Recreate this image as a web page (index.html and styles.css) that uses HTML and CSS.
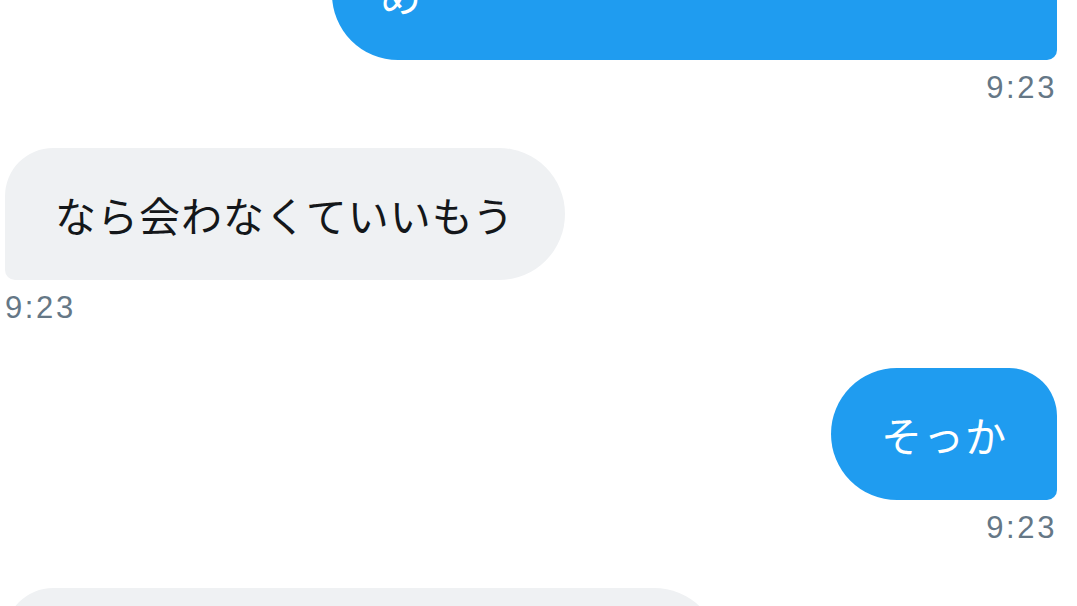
FILE: index.html
```html
<!DOCTYPE html>
<html lang="ja">
<head>
<meta charset="utf-8">
<title>DM</title>
<link rel="stylesheet" href="styles.css">
</head>
<body>
<main class="thread">
  <div class="msg msg-out msg-first">
    <div class="bubble bubble-out bubble-wide">め</div>
    <div class="time">9:23</div>
  </div>
  <div class="msg msg-in">
    <div class="bubble bubble-in">なら会わなくていいもう</div>
    <div class="time">9:23</div>
  </div>
  <div class="msg msg-out">
    <div class="bubble bubble-out">そっか</div>
    <div class="time">9:23</div>
  </div>
  <div class="msg msg-in">
    <div class="bubble bubble-in bubble-last">&nbsp;</div>
  </div>
</main>
</body>
</html>
```
FILE: styles.css
```css
html, body {
  margin: 0;
  padding: 0;
  background: #ffffff;
  overflow: hidden;
}

.thread {
  display: flex;
  flex-direction: column;
  padding: 0 20px 0 5px;
  margin-top: -72px;
}

.msg {
  display: flex;
  flex-direction: column;
  margin-bottom: 42px;
}

.msg-out {
  align-items: flex-end;
}

.msg-in {
  align-items: flex-start;
}

.bubble {
  font-family: "Noto Sans CJK JP", "Noto Sans", sans-serif;
  font-size: 41px;
  letter-spacing: 1px;
  line-height: 52px;
  padding: 40px 50px;
  white-space: nowrap;
}

.bubble-out {
  background: #1f9cf0;
  color: #ffffff;
  border-radius: 66px 48px 10px 66px;
}

.bubble-in {
  background: #eff1f3;
  color: #14171a;
  border-radius: 48px 66px 66px 10px;
}

.bubble-wide {
  width: 627px;
  padding-left: 48px;
}

.bubble-last {
  width: 615px;
}

.time {
  margin-top: 10px;
  font-family: "Liberation Sans", Arial, sans-serif;
  font-size: 31px;
  line-height: 36px;
  letter-spacing: 2.6px;
  color: #657786;
}
```
